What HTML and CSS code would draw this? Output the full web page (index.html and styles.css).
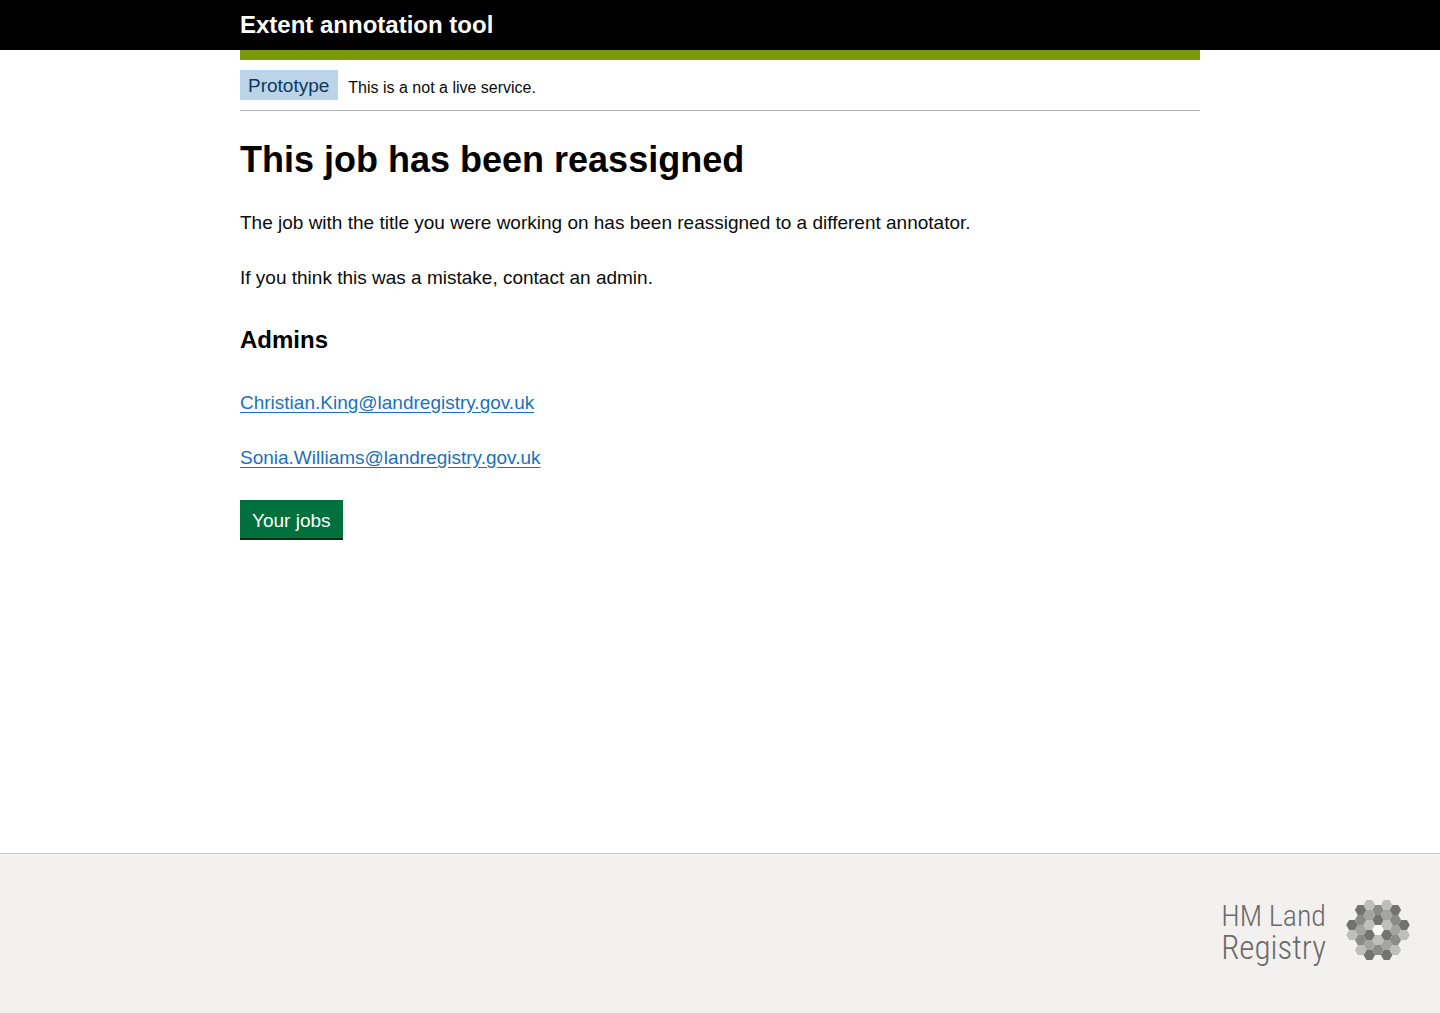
FILE: index.html
```html
<!DOCTYPE html>
<html lang="en">
<head>
  <meta charset="utf-8">
  <meta name="viewport" content="width=device-width, initial-scale=1">
  <title>Extent annotation tool</title>
  <link rel="stylesheet" href="styles.css">
</head>
<body>
  <header class="header">
    <div class="container header-title">Extent annotation tool</div>
  </header>
  <div class="container page">
    <div class="phase-banner">
      <strong class="phase-tag">Prototype</strong>
      <span class="phase-text">This is a not a live service.</span>
    </div>
    <main class="content">
      <h1 class="heading-large">This job has been reassigned</h1>
      <p class="body-text">The job with the title you were working on has been reassigned to a different annotator.</p>
      <p class="body-text">If you think this was a mistake, contact an admin.</p>
      <h2 class="heading-medium">Admins</h2>
      <p class="body-text"><a class="link" href="mailto:Christian.King@landregistry.gov.uk">Christian.King@landregistry.gov.uk</a></p>
      <p class="body-text"><a class="link" href="mailto:Sonia.Williams@landregistry.gov.uk">Sonia.Williams@landregistry.gov.uk</a></p>
      <button class="button" type="button">Your jobs</button>
    </main>
  </div>
  <footer class="footer">
    <div class="logo">
      <div class="logo-name"><span class="logo-line">HM Land</span><span class="logo-line logo-line-large">Registry</span></div>
      <svg class="logo-mark" viewBox="-32 -30 64 60" aria-hidden="true">
        <defs><path id="hex" d="M-5.78 0L-2.89-5H2.89L5.78 0L2.89 5H-2.89Z"/></defs>
        <g fill="#737372">
          <use href="#hex" x="-26" y="-5"/><use href="#hex" x="-17.33" y="-20"/><use href="#hex" x="-8.67" y="5"/><use href="#hex" x="-8.67" y="25"/><use href="#hex" x="0" y="-10"/><use href="#hex" x="8.67" y="5"/><use href="#hex" x="8.67" y="25"/><use href="#hex" x="17.33" y="-20"/><use href="#hex" x="26" y="-5"/>
        </g>
        <g fill="#8b8b8a">
          <use href="#hex" x="-17.33" y="-10"/><use href="#hex" x="-17.33" y="10"/><use href="#hex" x="0" y="-20"/><use href="#hex" x="0" y="20"/><use href="#hex" x="17.33" y="-10"/><use href="#hex" x="17.33" y="10"/>
        </g>
        <g fill="#a4a4a3">
          <use href="#hex" x="-17.33" y="0"/><use href="#hex" x="-8.67" y="-15"/><use href="#hex" x="-8.67" y="15"/><use href="#hex" x="8.67" y="-15"/><use href="#hex" x="8.67" y="15"/><use href="#hex" x="17.33" y="0"/>
        </g>
        <g fill="#bebebd">
          <use href="#hex" x="-26" y="5"/><use href="#hex" x="-17.33" y="20"/><use href="#hex" x="-8.67" y="-25"/><use href="#hex" x="-8.67" y="-5"/><use href="#hex" x="0" y="10"/><use href="#hex" x="8.67" y="-25"/><use href="#hex" x="8.67" y="-5"/><use href="#hex" x="17.33" y="20"/><use href="#hex" x="26" y="5"/>
        </g>
        <use href="#hex" fill="#f8f8f7"/>
      </svg>
    </div>
  </footer>
</body>
</html>
```
FILE: styles.css
```css
* {
  box-sizing: border-box;
}

body {
  display: flex;
  flex-direction: column;
  min-height: 100vh;
  margin: 0;
  background: #fff;
  color: #0b0c0c;
  font-family: "Liberation Sans", Arial, sans-serif;
  font-size: 19px;
  line-height: 25px;
}

.container {
  width: calc(100% - 60px);
  max-width: 960px;
  margin: 0 auto;
}

.header {
  padding: 10px 0;
  background: #000;
  color: #fff;
}

.header-title {
  font-size: 24px;
  font-weight: 700;
  line-height: 30px;
}

.page {
  flex: 1;
  border-top: 10px solid #7a9a08;
}

.phase-banner {
  display: flex;
  align-items: flex-end;
  gap: 10px;
  padding: 10px 0;
  border-bottom: 1px solid #b1b4b6;
}

.phase-tag {
  padding: 3px 9px 2px 8px;
  background: #bbd4ea;
  color: #0f385c;
  font-weight: 400;
}

.phase-text {
  font-size: 16px;
}

.content {
  padding: 29px 0 30px;
}

.heading-large {
  margin: 0 0 30px;
  color: #000;
  font-size: 36px;
  line-height: 40px;
}

.body-text {
  margin: 0 0 30px;
}

.heading-medium {
  margin: 35px 0;
  color: #000;
  font-size: 24px;
  line-height: 30px;
}

.link {
  color: #1d70b8;
  text-underline-offset: 3px;
}

.button {
  display: block;
  padding: 8px 12px 5px;
  border: 0;
  border-bottom: 2px solid #002d18;
  background: #00703c;
  color: #fff;
  font: inherit;
  cursor: pointer;
}

.footer {
  display: flex;
  justify-content: flex-end;
  padding: 46px 30px 49px;
  border-top: 1px solid #c8c9c9;
  background: #f2f1ef;
}

.logo {
  display: flex;
  gap: 20px;
}

.logo-name {
  display: flex;
  flex-direction: column;
  color: #6b6b6a;
  font-family: "Roboto Condensed", Roboto, sans-serif;
  font-size: 30px;
  font-weight: 300;
  line-height: 32px;
}

.logo-line-large {
  font-size: 33px;
}

.logo-mark {
  width: 64px;
  height: 60px;
}
```
